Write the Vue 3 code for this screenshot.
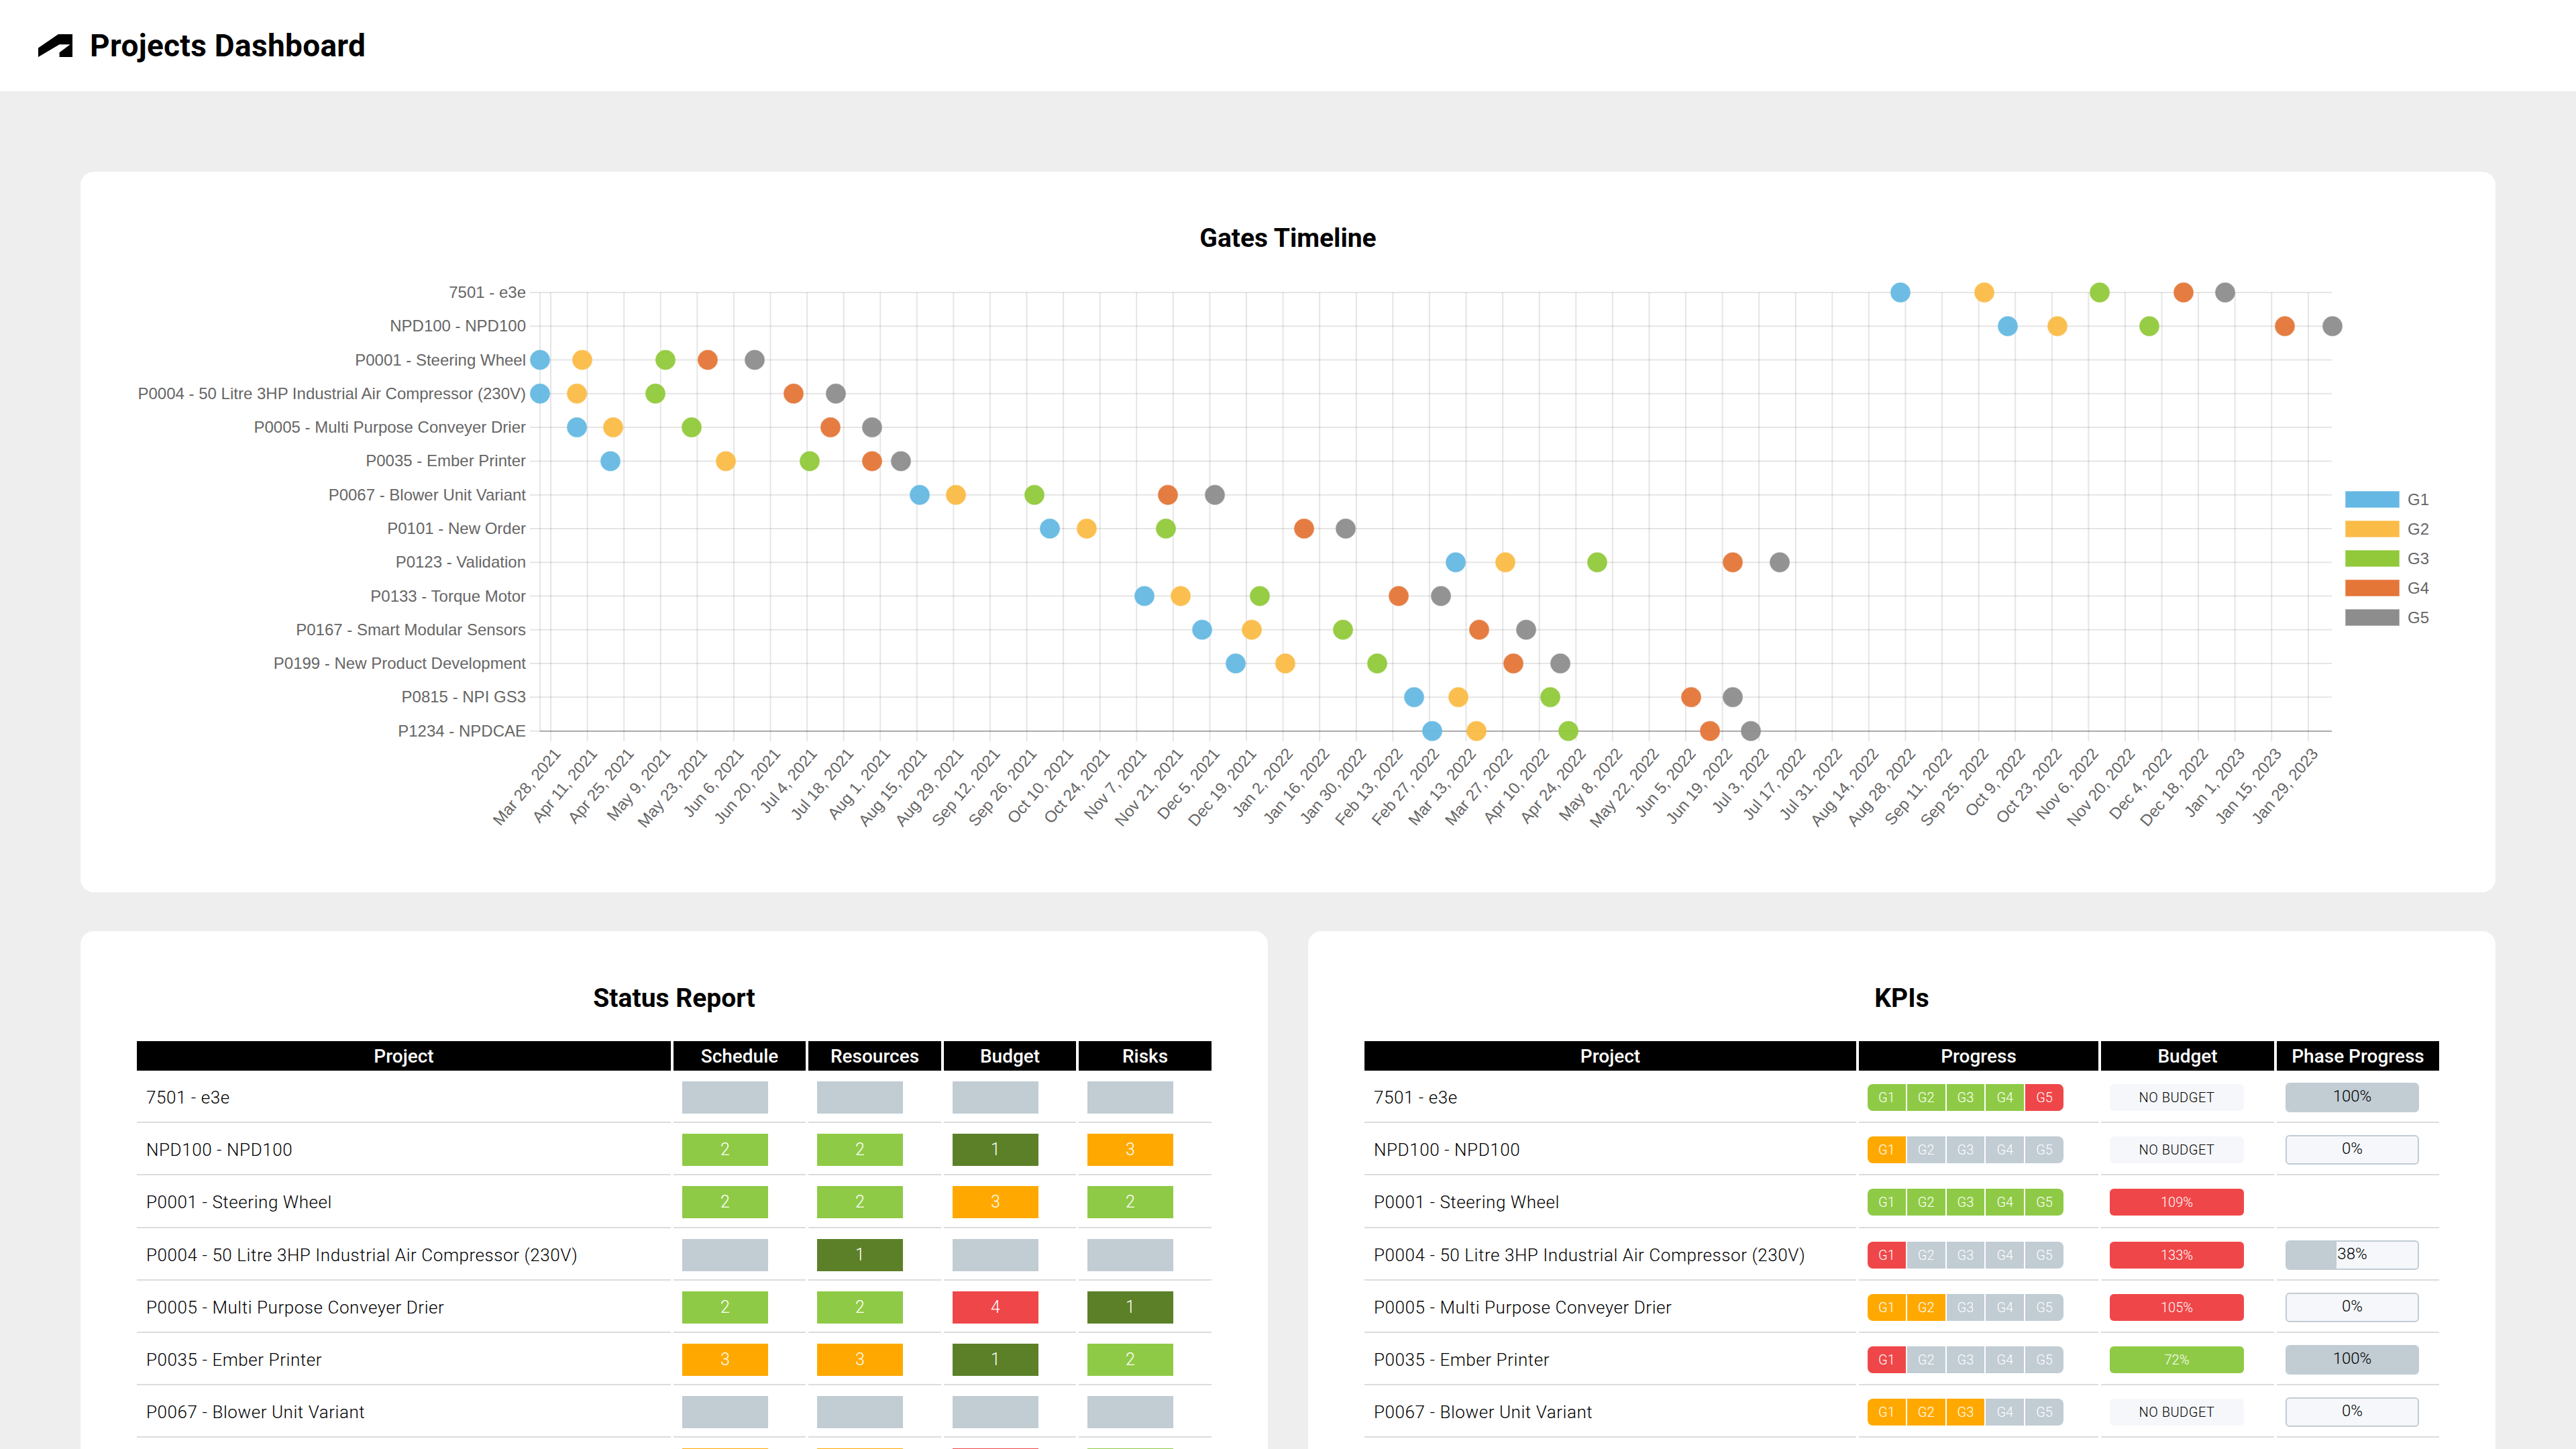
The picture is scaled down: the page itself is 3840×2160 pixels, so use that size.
<template>
  <div class="page">
    <header class="topbar">
      <svg class="logo" viewBox="22 35 150 100" aria-hidden="true">
        <path d="M22 95 110 35H172V135H115V115L162 80H115L22 135Z" />
      </svg>
      <h1>Projects Dashboard</h1>
    </header>

    <main class="content">
      <section class="card timeline">
        <h2>Gates Timeline</h2>
        <svg class="chart" viewBox="120 400 3600 930" width="3600" height="930">
          <line
            v-for="(tick, i) in ticks"
            :key="'v' + i"
            class="grid"
            :x1="tick.x"
            :x2="tick.x"
            y1="436"
            y2="1105"
          />
          <line class="grid" x1="805" x2="805" y1="436" y2="1090" />
          <line
            v-for="(row, i) in timeline"
            :key="'h' + i"
            class="grid"
            x1="790"
            x2="3476"
            :y1="rowY(i)"
            :y2="rowY(i)"
          />
          <line class="axis" x1="805" x2="3476" y1="1090" y2="1090" />

          <text
            v-for="(row, i) in timeline"
            :key="'l' + i"
            class="label"
            x="784"
            :y="rowY(i) + 8"
            text-anchor="end"
          >{{ row.name }}</text>

          <text
            v-for="(tick, i) in ticks"
            :key="'t' + i"
            class="label"
            text-anchor="end"
            :transform="`translate(${tick.x + 16} 1124) rotate(-50)`"
          >{{ tick.label }}</text>

          <template v-for="(row, i) in timeline" :key="'d' + i">
            <circle
              v-for="(x, g) in row.gates"
              :key="g"
              class="dot"
              :cx="x"
              :cy="rowY(i)"
              r="14.5"
              :fill="gateColors[g]"
              :stroke="gateColors[g]"
            />
          </template>

          <g v-for="(color, g) in gateColors" :key="'lg' + g">
            <rect class="swatch" x="3497" :y="733 + g * 44" width="79" height="23" :fill="color" :stroke="color" />
            <text class="label" x="3589" :y="753 + g * 44">G{{ g + 1 }}</text>
          </g>
        </svg>
      </section>

      <div class="tables">
        <section class="card">
          <h2>Status Report</h2>
          <table class="status">
            <thead>
              <tr>
                <th>Project</th>
                <th>Schedule</th>
                <th>Resources</th>
                <th>Budget</th>
                <th>Risks</th>
              </tr>
            </thead>
            <tbody>
              <tr v-for="(row, r) in statusRows" :key="r">
                <td class="name">{{ row.name }}</td>
                <td v-for="(val, i) in row.vals" :key="i">
                  <!-- the last row only peeks in at the bottom of the page -->
                  <div :class="['badge', 'level-' + val]">{{ row.name && val ? val : "" }}</div>
                </td>
              </tr>
            </tbody>
          </table>
        </section>

        <section class="card">
          <h2>KPIs</h2>
          <table class="kpis">
            <thead>
              <tr>
                <th>Project</th>
                <th>Progress</th>
                <th>Budget</th>
                <th>Phase Progress</th>
              </tr>
            </thead>
            <tbody>
              <tr v-for="row in kpiRows" :key="row.name">
                <td class="name">{{ row.name }}</td>
                <td>
                  <div class="gates">
                    <span v-for="(c, i) in row.gates" :key="i" :class="['gate', 'c-' + c]">G{{ i + 1 }}</span>
                  </div>
                </td>
                <td>
                  <div v-if="row.budget" :class="['budget', 'c-' + row.budgetColor]">{{ row.budget }}</div>
                  <div v-else class="budget none">NO BUDGET</div>
                </td>
                <td>
                  <div v-if="row.phase !== null" class="phase">
                    <div class="phase-fill" :style="{ width: row.phase + '%' }"></div>
                    <span>{{ row.phase }}%</span>
                  </div>
                </td>
              </tr>
            </tbody>
          </table>
        </section>
      </div>
    </main>
  </div>
</template>

<script setup>
const gateColors = ["#65b8e3", "#fbbc47", "#91c93b", "#e47638", "#8d8d8d"];

const timeline = [
  { name: "7501 - e3e", gates: [2833, 2958, 3130, 3255, 3317] },
  { name: "NPD100 - NPD100", gates: [2993, 3067, 3204, 3406, 3477] },
  { name: "P0001 - Steering Wheel", gates: [805, 868, 992, 1055, 1125] },
  { name: "P0004 - 50 Litre 3HP Industrial Air Compressor (230V)", gates: [805, 860, 977, 1183, 1246] },
  { name: "P0005 - Multi Purpose Conveyer Drier", gates: [860, 914, 1031, 1238, 1300] },
  { name: "P0035 - Ember Printer", gates: [910, 1082, 1207, 1300, 1343] },
  { name: "P0067 - Blower Unit Variant", gates: [1371, 1425, 1542, 1741, 1811] },
  { name: "P0101 - New Order", gates: [1565, 1620, 1738, 1944, 2006] },
  { name: "P0123 - Validation", gates: [2170, 2244, 2381, 2583, 2653] },
  { name: "P0133 - Torque Motor", gates: [1706, 1760, 1878, 2085, 2148] },
  { name: "P0167 - Smart Modular Sensors", gates: [1792, 1866, 2002, 2205, 2275] },
  { name: "P0199 - New Product Development", gates: [1842, 1916, 2053, 2256, 2326] },
  { name: "P0815 - NPI GS3", gates: [2108, 2174, 2311, 2521, 2583] },
  { name: "P1234 - NPDCAE", gates: [2135, 2201, 2338, 2549, 2610] },
];

function rowY(i) {
  return 436 + i * 50.28;
}

const months = ["Jan", "Feb", "Mar", "Apr", "May", "Jun", "Jul", "Aug", "Sep", "Oct", "Nov", "Dec"];

// one tick every two weeks, starting Mar 28, 2021
const ticks = Array.from({ length: 49 }, (_, i) => {
  const d = new Date(Date.UTC(2021, 2, 28 + i * 14));
  return {
    x: 821 + i * 54.58,
    label: `${months[d.getUTCMonth()]} ${d.getUTCDate()}, ${d.getUTCFullYear()}`,
  };
});

const statusRows = [
  { name: "7501 - e3e", vals: [0, 0, 0, 0] },
  { name: "NPD100 - NPD100", vals: [2, 2, 1, 3] },
  { name: "P0001 - Steering Wheel", vals: [2, 2, 3, 2] },
  { name: "P0004 - 50 Litre 3HP Industrial Air Compressor (230V)", vals: [0, 1, 0, 0] },
  { name: "P0005 - Multi Purpose Conveyer Drier", vals: [2, 2, 4, 1] },
  { name: "P0035 - Ember Printer", vals: [3, 3, 1, 2] },
  { name: "P0067 - Blower Unit Variant", vals: [0, 0, 0, 0] },
  { name: "", vals: [3, 3, 4, 2] },
];

const kpiRows = [
  { name: "7501 - e3e", gates: ["g", "g", "g", "g", "r"], phase: 100 },
  { name: "NPD100 - NPD100", gates: ["o", "n", "n", "n", "n"], phase: 0 },
  { name: "P0001 - Steering Wheel", gates: ["g", "g", "g", "g", "g"], budget: "109%", budgetColor: "r", phase: null },
  { name: "P0004 - 50 Litre 3HP Industrial Air Compressor (230V)", gates: ["r", "n", "n", "n", "n"], budget: "133%", budgetColor: "r", phase: 38 },
  { name: "P0005 - Multi Purpose Conveyer Drier", gates: ["o", "o", "n", "n", "n"], budget: "105%", budgetColor: "r", phase: 0 },
  { name: "P0035 - Ember Printer", gates: ["r", "n", "n", "n", "n"], budget: "72%", budgetColor: "g", phase: 100 },
  { name: "P0067 - Blower Unit Variant", gates: ["o", "o", "o", "n", "n"], phase: 0 },
];
</script>

<style>
html,
body {
  margin: 0;
  height: 100%;
  overflow: hidden;
  background: #eeeeee;
}
</style>

<style scoped>
.page {
  width: 3840px;
  height: 2160px;
  overflow: hidden;
  background: #eeeeee;
  font-family: Roboto, "Liberation Sans", sans-serif;
  color: #000;
}
.topbar {
  height: 136px;
  background: #fff;
  display: flex;
  align-items: center;
  padding-left: 57px;
  gap: 26px;
}
.logo {
  width: 51px;
  height: 34px;
  fill: #000;
}
h1 {
  margin: 0;
  font-size: 46px;
  font-weight: 700;
  letter-spacing: 0.3px;
}
.content {
  padding: 120px 120px 0;
  display: flex;
  flex-direction: column;
  gap: 58px;
}
.card {
  background: #fff;
  border-radius: 20px;
  padding: 80px 80px 0;
  flex: 1;
  min-width: 0;
}
h2 {
  margin: 0 0 44px;
  font-size: 39px;
  line-height: 40px;
  font-weight: 700;
  text-align: center;
}
.timeline {
  height: 1074px;
  box-sizing: border-box;
  padding: 79px 0 0;
}
.timeline h2 {
  margin: 0 0 25px;
}
.chart {
  display: block;
}
.grid {
  stroke: rgba(0, 0, 0, 0.1);
  stroke-width: 2;
}
.axis {
  stroke: rgba(0, 0, 0, 0.25);
  stroke-width: 2;
}
.label {
  font-family: "Liberation Sans", Arial, sans-serif;
  font-size: 24px;
  fill: #666;
}
.dot {
  fill-opacity: 0.95;
  stroke-width: 1.5;
  stroke-opacity: 0.4;
}
.swatch {
  stroke-width: 2;
  stroke-opacity: 0.7;
}
.tables {
  display: flex;
  gap: 60px;
}
table {
  width: 100%;
  table-layout: fixed;
  border-collapse: separate;
  border-spacing: 4px 0;
}
th {
  height: 44px;
  padding: 0;
  background: #000;
  color: #fff;
  font-size: 28px;
  font-weight: 500;
  text-align: center;
}
td {
  height: 72.2px;
  padding: 4px 0 0 13px;
  border-bottom: 2px solid #dcdcdc;
  box-sizing: content-box;
}
td.name {
  padding-left: 14px;
  font-size: 26px;
  font-weight: 300;
  letter-spacing: 0.57px;
}
.status th:nth-child(1) {
  width: 796px;
}
.status th:nth-child(2),
.status th:nth-child(4) {
  width: 197px;
}
.status th:nth-child(3) {
  width: 198px;
}
.badge {
  width: 128px;
  height: 48px;
  line-height: 48px;
  text-align: center;
  color: #fff;
  font-size: 25px;
  font-weight: 300;
}
.level-0 {
  background: #c1ccd3;
}
.level-1 {
  background: #5c8028;
}
.level-2 {
  background: #8fca46;
}
.level-3 {
  background: #ffa900;
}
.level-4 {
  background: #ef4749;
}
.kpis th:first-child {
  width: 733px;
}
.kpis th:nth-child(2) {
  width: 357px;
}
.kpis th:nth-child(3) {
  width: 258px;
}
.gates {
  display: flex;
  gap: 2px;
  width: 292px;
  height: 40px;
  border-radius: 8px;
  overflow: hidden;
}
.gate {
  flex: 1;
  line-height: 40px;
  text-align: center;
  color: #fff;
  font-size: 20px;
  font-weight: 300;
}
.c-g {
  background: #8fca46;
}
.c-o {
  background: #ffa900;
}
.c-r {
  background: #ef4749;
}
.c-n {
  background: #c1ccd3;
}
.budget {
  width: 200px;
  height: 40px;
  line-height: 40px;
  text-align: center;
  border-radius: 6px;
  color: #fff;
  font-size: 20px;
  font-weight: 300;
}
.budget.none {
  background: #f5f7fa;
  color: #000;
  letter-spacing: 0.5px;
}
.phase {
  position: relative;
  width: 199px;
  height: 44px;
  box-sizing: border-box;
  border: 2px solid #c1ccd3;
  border-radius: 6px;
  background: #f5f7fa;
  overflow: hidden;
  text-align: center;
  line-height: 36px;
  font-size: 24px;
  font-weight: 300;
}
.phase-fill {
  position: absolute;
  left: 0;
  top: 0;
  bottom: 0;
  background: #c1ccd3;
}
.phase span {
  position: relative;
}
</style>
